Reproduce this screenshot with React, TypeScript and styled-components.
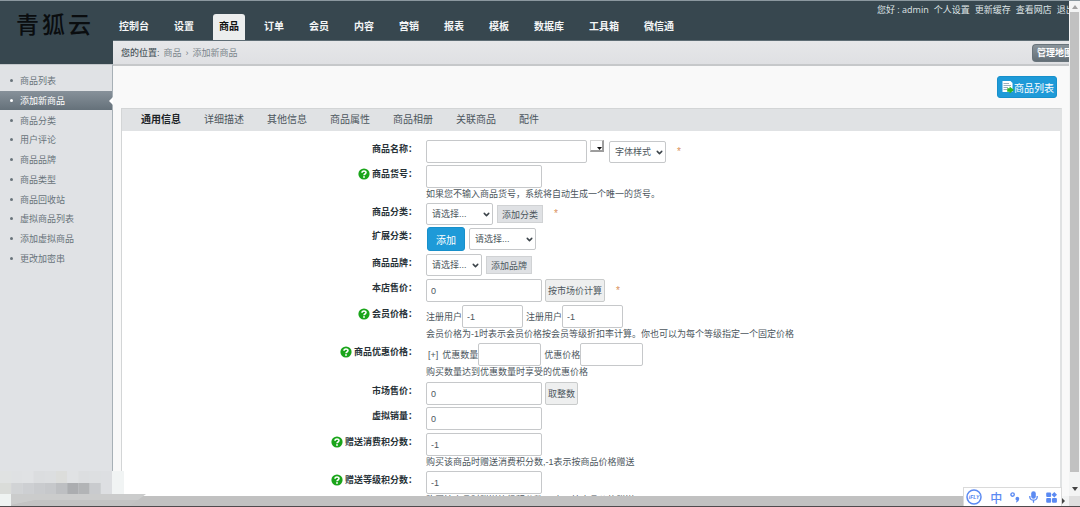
import React, { ReactNode } from "react";
import styled, { createGlobalStyle, css } from "styled-components";
import { ChevronDown } from "lucide-react";

const latin = `"Open Sans", "Noto Sans CJK SC", sans-serif`;
const arial = `"Liberation Sans", "Noto Sans CJK SC", sans-serif`;

const Global = createGlobalStyle`
  * { box-sizing: border-box; }
  body { margin: 0; overflow: hidden; font-family: ${arial}; font-size: 9px; color: #4c565d; }
  button, input, select { font-family: inherit; font-size: inherit; color: inherit; margin: 0; }
  a { color: inherit; text-decoration: none; }
  ul { list-style: none; margin: 0; padding: 0; }
`;

const Screen = styled.div`
  position: relative;
  height: 100vh;
  display: flex;
  flex-direction: column;
  border-top: 1px solid #8b989f;
  border-bottom: 1px solid #4f4a4d;
  background: #f9f9f9;
`;

const Upper = styled.div`
  flex: 1;
  min-height: 0;
  display: flex;
`;

const Sidebar = styled.aside`
  flex: 0 0 113px;
  display: flex;
  flex-direction: column;
  background: #e0e2e5;
`;

const Logo = styled.div`
  height: 63px;
  padding: 9px 0 0 16px;
  display: flex;
  gap: 3px;
  background: #37474f;
  color: #0a0d0f;
  font-size: 23px;
  font-weight: 500;
  line-height: 30px;
`;

const Menu = styled.nav`
  flex: 1;
  padding-top: 6px;
  border-top: 1px solid #c3c7ca;
  border-right: 1px solid #a7b0b6;
`;

const MenuList = styled.ul`
  height: 197px;
  display: grid;
  grid-auto-rows: 1fr;
`;

const MenuItem = styled.li<{ $active?: boolean }>`
  position: relative;
  display: flex;
  align-items: center;
  padding-left: 10px;
  gap: 7px;
  color: #69747b;
  &::before {
    content: "";
    width: 3px;
    height: 3px;
    border-radius: 50%;
    background: currentColor;
  }
  ${(p) =>
    p.$active &&
    css`
      color: #fff;
      background: linear-gradient(#87919a, #65717a);
      &::after {
        content: "";
        position: absolute;
        right: -1px;
        top: 6px;
        border: solid transparent;
        border-width: 4px 4px 4px 0;
        border-right-color: #fff;
      }
    `}
`;

const Main = styled.div`
  flex: 1;
  min-width: 0;
  display: flex;
  flex-direction: column;
`;

const Header = styled.header`
  height: 40px;
  display: flex;
  justify-content: space-between;
  background: #37474f;
  border-bottom: 1px solid #5d6c74;
`;

const Nav = styled.nav`
  display: flex;
  align-items: flex-end;
  gap: 13px;
`;

const NavLink = styled.a<{ $active?: boolean }>`
  height: 26px;
  padding: 0 6px;
  border-radius: 3px 3px 0 0;
  font-size: 10px;
  font-weight: 700;
  line-height: 25px;
  white-space: nowrap;
  color: ${(p) => (p.$active ? "#111" : "#f4f6f7")};
  background: ${(p) => (p.$active ? "#eceeee" : "none")};
`;

const UserLinks = styled.div`
  width: 192px;
  display: flex;
  gap: 5px;
  overflow: hidden;
  white-space: nowrap;
  font-family: ${latin};
  line-height: 18px;
  color: #dfe4e6;
  > * { flex: none; }
`;

const Crumbs = styled.div`
  height: 25px;
  display: flex;
  align-items: center;
  gap: 4px;
  padding-left: 8px;
  border-bottom: 2px solid #c6c8ca;
  background: linear-gradient(#e6e7e9, #dfe0e3);
  color: #7b858b;
`;

const CrumbTitle = styled.span`
  color: #4d5960;
  font-weight: 500;
`;

const MapButton = styled.button`
  width: 37px;
  height: 18px;
  margin-left: auto;
  padding: 0 0 0 4px;
  overflow: hidden;
  white-space: nowrap;
  text-align: left;
  border: 1px solid #69747b;
  border-right: 0;
  border-radius: 4px 0 0 4px;
  background: linear-gradient(#8a949b, #626e76);
  color: #fff;
  font-weight: 700;
`;

const Content = styled.main`
  flex: 1;
  min-height: 0;
  display: flex;
  flex-direction: column;
  padding: 10px 7px 0 8px;
  overflow: hidden;
`;

const Toolbar = styled.div`
  flex: none;
  height: 32px;
  padding-right: 5px;
  display: flex;
  justify-content: flex-end;
  align-items: flex-start;
`;

const BlueButton = styled.button`
  height: 22px;
  padding: 0 2px 0 4px;
  display: flex;
  align-items: center;
  border: 1px solid #1790cb;
  border-radius: 3px;
  background: #1e9ad8;
  color: #fff;
  font-size: 10px;
`;

const AddButton = styled(BlueButton)`
  width: 38px;
  height: 24px;
  margin: 0 1px;
  padding: 0;
  justify-content: center;
`;

const Panel = styled.section`
  flex: 1;
  min-height: 0;
  overflow: hidden;
  border: 1px solid #d3d5d6;
  border-bottom: 0;
  border-right: 2px solid #e0e2e3;
  background: #fff;
`;

const Tabs = styled.div`
  height: 22px;
  padding-left: 19px;
  display: flex;
  gap: 23px;
  background: #e0e2e4;
`;

const Tab = styled.button<{ $active?: boolean }>`
  padding: 0;
  border: 0;
  background: none;
  font-size: 10px;
  line-height: 20px;
  white-space: nowrap;
  font-weight: ${(p) => (p.$active ? 700 : 400)};
  color: ${(p) => (p.$active ? "#1c2327" : "#4c565d")};
`;

const Form = styled.form`
  padding-top: 9px;
`;

const FormRow = styled.div<{ $space: number }>`
  display: flex;
  gap: 9px;
  margin-bottom: ${(p) => p.$space}px;
`;

const RowLabel = styled.label`
  flex: 0 0 295px;
  height: 17px;
  display: flex;
  justify-content: flex-end;
  align-items: center;
  gap: 2px;
  color: #283238;
  font-weight: 700;
  white-space: nowrap;
`;

const Fields = styled.div`
  display: flex;
  align-items: center;
  gap: 3px;
  white-space: nowrap;
`;

const Pair = styled.label`
  display: flex;
  align-items: center;
`;

const PlusLink = styled.a`
  margin: 0 1px 0 2px;
`;

const Note = styled.div`
  line-height: 13px;
  white-space: nowrap;
`;

const TextBox = styled.input<{ $w: number }>`
  width: ${(p) => p.$w}px;
  height: 23px;
  padding: 1px 4px 0;
  border: 1px solid #c6c8ca;
  border-radius: 2px;
  background: #fff;
  outline: 0;
`;

const SelectWrap = styled.span<{ $w: number }>`
  position: relative;
  width: ${(p) => p.$w}px;
  height: 22px;
  svg {
    position: absolute;
    right: 2px;
    top: 7px;
    pointer-events: none;
  }
`;

const SelectBox = styled.select`
  appearance: none;
  width: 100%;
  height: 100%;
  padding: 0 0 0 5px;
  border: 1px solid #c6c8ca;
  border-radius: 2px;
  background: #fff;
`;

const GreyButton = styled.button`
  height: 18px;
  margin-left: 1px;
  padding: 0 4px;
  border: 1px solid #d0d2d4;
  background: #dfe1e4;
  white-space: nowrap;
`;

const CalcButton = styled(GreyButton)`
  height: 23px;
  margin: 0;
  padding: 0 2px;
  border-color: #c9cbcb;
  border-radius: 2px;
  background: #eeefef;
`;

const ColorButton = styled.button`
  align-self: flex-start;
  width: 14px;
  height: 12px;
  margin-right: 2px;
  padding: 0;
  display: flex;
  justify-content: flex-end;
  align-items: flex-end;
  border: solid #d6d6d6;
  border-width: 1px 2px 2px 1px;
  border-right-color: #9d9d9d;
  border-bottom-color: #9d9d9d;
  background: #fff;
`;

const Star = styled.span`
  margin-left: 8px;
  font-size: 10px;
  line-height: 12px;
  color: #d9905a;
`;

const VScroll = styled.div`
  flex: 0 0 11px;
  padding: 4px 1px 5px;
  display: flex;
  flex-direction: column;
  align-items: center;
  gap: 3px;
  background: #f3f4f4;
  svg { flex: none; }
`;

const VThumb = styled.div`
  width: 9px;
  flex: 1;
  margin-bottom: 12px;
  background: #c1c1c1;
`;

const HScroll = styled.div`
  height: 10px;
  display: flex;
  background: #c1c1c1;
`;

const HArrow = styled.div`
  width: 7px;
  margin-left: auto;
  display: flex;
  align-items: center;
  background: #f3f4f4;
`;

const HCorner = styled.div`
  width: 11px;
  background: #dfdfdf;
`;

const Mosaic = styled.svg`
  position: absolute;
  left: 0;
  bottom: 0;
`;

const ImeBar = styled.div`
  position: absolute;
  right: 18px;
  bottom: 0;
  width: 99px;
  height: 19px;
  padding: 0 4px 0 2px;
  display: flex;
  align-items: center;
  justify-content: space-between;
  border: 1px solid #dadada;
  border-bottom: 0;
  background: #fff;
  color: #5b8af2;
  font-size: 12px;
  font-weight: 500;
`;

const Help = () => (
  <svg width="12" height="12" viewBox="0 0 12 12" aria-hidden="true">
    <circle cx="6" cy="6" r="5.6" fill="#1aa51a" />
    <path d="M4 4.8C4 2.4 8 2.4 8 4.6C8 6 6 5.9 6 7.2" fill="none" stroke="#fff" strokeWidth="1.6" />
    <circle cx="6" cy="9" r="0.9" fill="#fff" />
  </svg>
);

const SheetIcon = () => (
  <svg width="12" height="14" viewBox="0 0 12 14" aria-hidden="true">
    <path d="M0.5 1H8.5L10.5 3V12H0.5Z" fill="#fff" />
    <path d="M1.5 3.5H7M1.5 5.5H9M1.5 7.5H6M1.5 9.5H5" stroke="#8fa6b5" strokeWidth="0.9" />
    <path d="M5.2 8.2H7.6V6.4L12 10L7.6 13.6V11.8H5.2Z" fill="#2fb526" />
  </svg>
);

type RowProps = { id: string; label: string; help?: boolean; note?: string; space?: number; children: ReactNode };

const Row = ({ id, label, help, note, space = 2, children }: RowProps) => (
  <FormRow $space={space}>
    <RowLabel htmlFor={id}>
      {help && <Help />}
      {label}：
    </RowLabel>
    <div>
      <Fields>{children}</Fields>
      {note && <Note>{note}</Note>}
    </div>
  </FormRow>
);

const Select = ({ id, w, text }: { id: string; w: number; text: string }) => (
  <SelectWrap $w={w}>
    <SelectBox id={id} aria-label={text}>
      <option>{text}</option>
    </SelectBox>
    <ChevronDown size={9} strokeWidth={4} color="#3c444a" />
  </SelectWrap>
);

const navItems = ["控制台", "设置", "商品", "订单", "会员", "内容", "营销", "报表", "模板", "数据库", "工具箱", "微信通"];
const menuItems = ["商品列表", "添加新商品", "商品分类", "用户评论", "商品品牌", "商品类型", "商品回收站", "虚拟商品列表", "添加虚拟商品", "更改加密串"];
const tabs = ["通用信息", "详细描述", "其他信息", "商品属性", "商品相册", "关联商品", "配件"];
const mosaicTop = ["#e0e2e2", "#dfe1e3", "#e0e2e4", "#dbdddf", "#dcdee0", "#dcdddb", "#e0e2e4", "#dcdee0", "#dddfe1", "#dddfe2"];
const mosaicLow = ["#dadcd9", "#d1d3d5", "#cdcfd2", "#c9cbce", "#c6c8cb", "#bdbfc2", "#abadb0", "#b2b4b6", "#c9cbce", "#dddfe2"];

export default function App() {
  return (
    <Screen>
      <Global />
      <Upper>
        <Sidebar>
          <Logo>
            <span>青</span>
            <span>狐</span>
            <span>云</span>
          </Logo>
          <Menu>
            <MenuList>
              {menuItems.map((m, i) => (
                <MenuItem key={m} $active={i === 1}>
                  <a href="#menu">{m}</a>
                </MenuItem>
              ))}
            </MenuList>
          </Menu>
        </Sidebar>
        <Main>
          <Header>
            <Nav>
              {navItems.map((n, i) => (
                <NavLink key={n} href="#nav" $active={i === 2}>
                  {n}
                </NavLink>
              ))}
            </Nav>
            <UserLinks>
              <span>您好 : admin</span>
              <a href="#me">个人设置</a>
              <a href="#cache">更新缓存</a>
              <a href="#shop">查看网店</a>
              <a href="#exit">退出</a>
            </UserLinks>
          </Header>
          <Crumbs>
            <CrumbTitle>您的位置:</CrumbTitle>
            <a href="#goods">商品</a>
            <span>›</span>
            <span>添加新商品</span>
            <MapButton type="button">管理地图</MapButton>
          </Crumbs>
          <Content>
            <Toolbar>
              <BlueButton type="button">
                <SheetIcon />
                商品列表
              </BlueButton>
            </Toolbar>
            <Panel>
              <Tabs>
                {tabs.map((t, i) => (
                  <Tab key={t} type="button" $active={i === 0}>
                    {t}
                  </Tab>
                ))}
              </Tabs>
              <Form>
                <Row id="name" label="商品名称">
                  <TextBox id="name" $w={161} />
                  <ColorButton type="button" aria-label="颜色">
                    <svg width="5" height="3" viewBox="0 0 5 3">
                      <path d="M0 0H5L2.5 3Z" fill="#111" />
                    </svg>
                  </ColorButton>
                  <Select id="style" w={57} text="字体样式" />
                  <Star>*</Star>
                </Row>
                <Row id="sn" label="商品货号" help note="如果您不输入商品货号，系统将自动生成一个唯一的货号。">
                  <TextBox id="sn" $w={116} />
                </Row>
                <Row id="cat" label="商品分类">
                  <Select id="cat" w={67} text="请选择..." />
                  <GreyButton type="button">添加分类</GreyButton>
                  <Star>*</Star>
                </Row>
                <Row id="ext" label="扩展分类" space={3}>
                  <AddButton type="button">添加</AddButton>
                  <Select id="ext" w={67} text="请选择..." />
                </Row>
                <Row id="brand" label="商品品牌" space={3}>
                  <Select id="brand" w={56} text="请选择..." />
                  <GreyButton type="button">添加品牌</GreyButton>
                </Row>
                <Row id="price" label="本店售价" space={3}>
                  <TextBox id="price" $w={116} defaultValue="0" />
                  <CalcButton type="button">按市场价计算</CalcButton>
                  <Star>*</Star>
                </Row>
                <Row id="rank1" label="会员价格" help note="会员价格为-1时表示会员价格按会员等级折扣率计算。你也可以为每个等级指定一个固定价格">
                  <Pair>
                    注册用户
                    <TextBox id="rank1" $w={61} defaultValue="-1" />
                  </Pair>
                  <Pair>
                    注册用户
                    <TextBox $w={61} defaultValue="-1" />
                  </Pair>
                </Row>
                <Row id="vol" label="商品优惠价格" help note="购买数量达到优惠数量时享受的优惠价格" space={3}>
                  <PlusLink href="#add">[+]</PlusLink>
                  <Pair>
                    优惠数量
                    <TextBox id="vol" $w={63} />
                  </Pair>
                  <Pair>
                    优惠价格
                    <TextBox $w={63} />
                  </Pair>
                </Row>
                <Row id="market" label="市场售价">
                  <TextBox id="market" $w={116} defaultValue="0" />
                  <CalcButton type="button">取整数</CalcButton>
                </Row>
                <Row id="virtual" label="虚拟销量" space={3}>
                  <TextBox id="virtual" $w={116} defaultValue="0" />
                </Row>
                <Row id="pay" label="赠送消费积分数" help note="购买该商品时赠送消费积分数,-1表示按商品价格赠送">
                  <TextBox id="pay" $w={116} defaultValue="-1" />
                </Row>
                <Row id="level" label="赠送等级积分数" help note="购买该商品时赠送等级积分数,-1表示按商品价格赠送">
                  <TextBox id="level" $w={116} defaultValue="-1" />
                </Row>
              </Form>
            </Panel>
          </Content>
        </Main>
        <VScroll>
          <svg width="6" height="4" viewBox="0 0 6 4" aria-hidden="true">
            <path d="M0 4L3 0L6 4Z" fill="#a0a0a0" />
          </svg>
          <VThumb />
          <svg width="6" height="4" viewBox="0 0 6 4" aria-hidden="true">
            <path d="M0 0L3 4L6 0Z" fill="#444" />
          </svg>
        </VScroll>
      </Upper>
      <HScroll>
        <HArrow>
          <svg width="4" height="6" viewBox="0 0 4 6" aria-hidden="true">
            <path d="M0 0L3 3L0 6Z" fill="#444" />
          </svg>
        </HArrow>
        <HCorner />
      </HScroll>
      <Mosaic width="146" height="35" viewBox="0 0 146 35" aria-hidden="true">
        {mosaicTop.map((c, i) => (
          <rect key={i} x={i * 11.2} y="0" width="11.3" height="12" fill={c} />
        ))}
        {mosaicLow.map((c, i) => (
          <rect key={i} x={i * 11.2} y="12" width="11.3" height="11" fill={c} />
        ))}
        <rect x="112" y="0" width="12" height="23" fill="#f1f4f4" />
        <rect x="0" y="23" width="11" height="12" fill="#eff3f2" />
        <path d="M11 23H146L138 29H36L11 34Z" fill="#cbcccc" />
        <path d="M11 34L36 29H138L130 35H11Z" fill="#c3c3c3" />
      </Mosaic>
      <ImeBar>
        <svg width="16" height="16" viewBox="0 0 16 16" aria-hidden="true">
          <circle cx="8" cy="8" r="7" fill="none" stroke="#5b8af2" strokeWidth="1.5" />
          <text x="8" y="10" textAnchor="middle" fontSize="5" fontWeight="700" fontStyle="italic" fill="#4f7ff0">iFLY</text>
        </svg>
        <span>中</span>
        <svg width="10" height="11" viewBox="0 0 10 11" aria-hidden="true">
          <circle cx="2.6" cy="2.6" r="1.7" fill="none" stroke="#5b8af2" strokeWidth="1.4" />
          <path d="M7.2 4.8A2 2 0 0 1 9.2 7Q9 9.6 6.4 10.6L5.9 9.6Q6.8 9.2 6.9 8.7A2 2 0 0 1 7.2 4.8Z" fill="#5b8af2" />
        </svg>
        <svg width="9" height="12" viewBox="0 0 9 12" aria-hidden="true">
          <rect x="2.2" y="0.3" width="4.6" height="7.4" rx="2.3" fill="#5b8af2" />
          <path d="M0.8 5V6A3.7 3.2 0 0 0 8.2 6V5M4.5 9V11.8" fill="none" stroke="#5b8af2" strokeWidth="1.3" />
        </svg>
        <svg width="11" height="11" viewBox="0 0 11 11" aria-hidden="true">
          <rect x="0.2" y="0.4" width="4.9" height="4.7" rx="1" fill="#5b8af2" />
          <path d="M8.3 0L11 2.7L8.3 5.4L5.6 2.7Z" fill="#5b8af2" />
          <rect x="0.2" y="6" width="4.9" height="4.7" rx="1" fill="#5b8af2" />
          <rect x="6" y="6" width="4.9" height="4.7" rx="1" fill="#5b8af2" />
        </svg>
      </ImeBar>
    </Screen>
  );
}
